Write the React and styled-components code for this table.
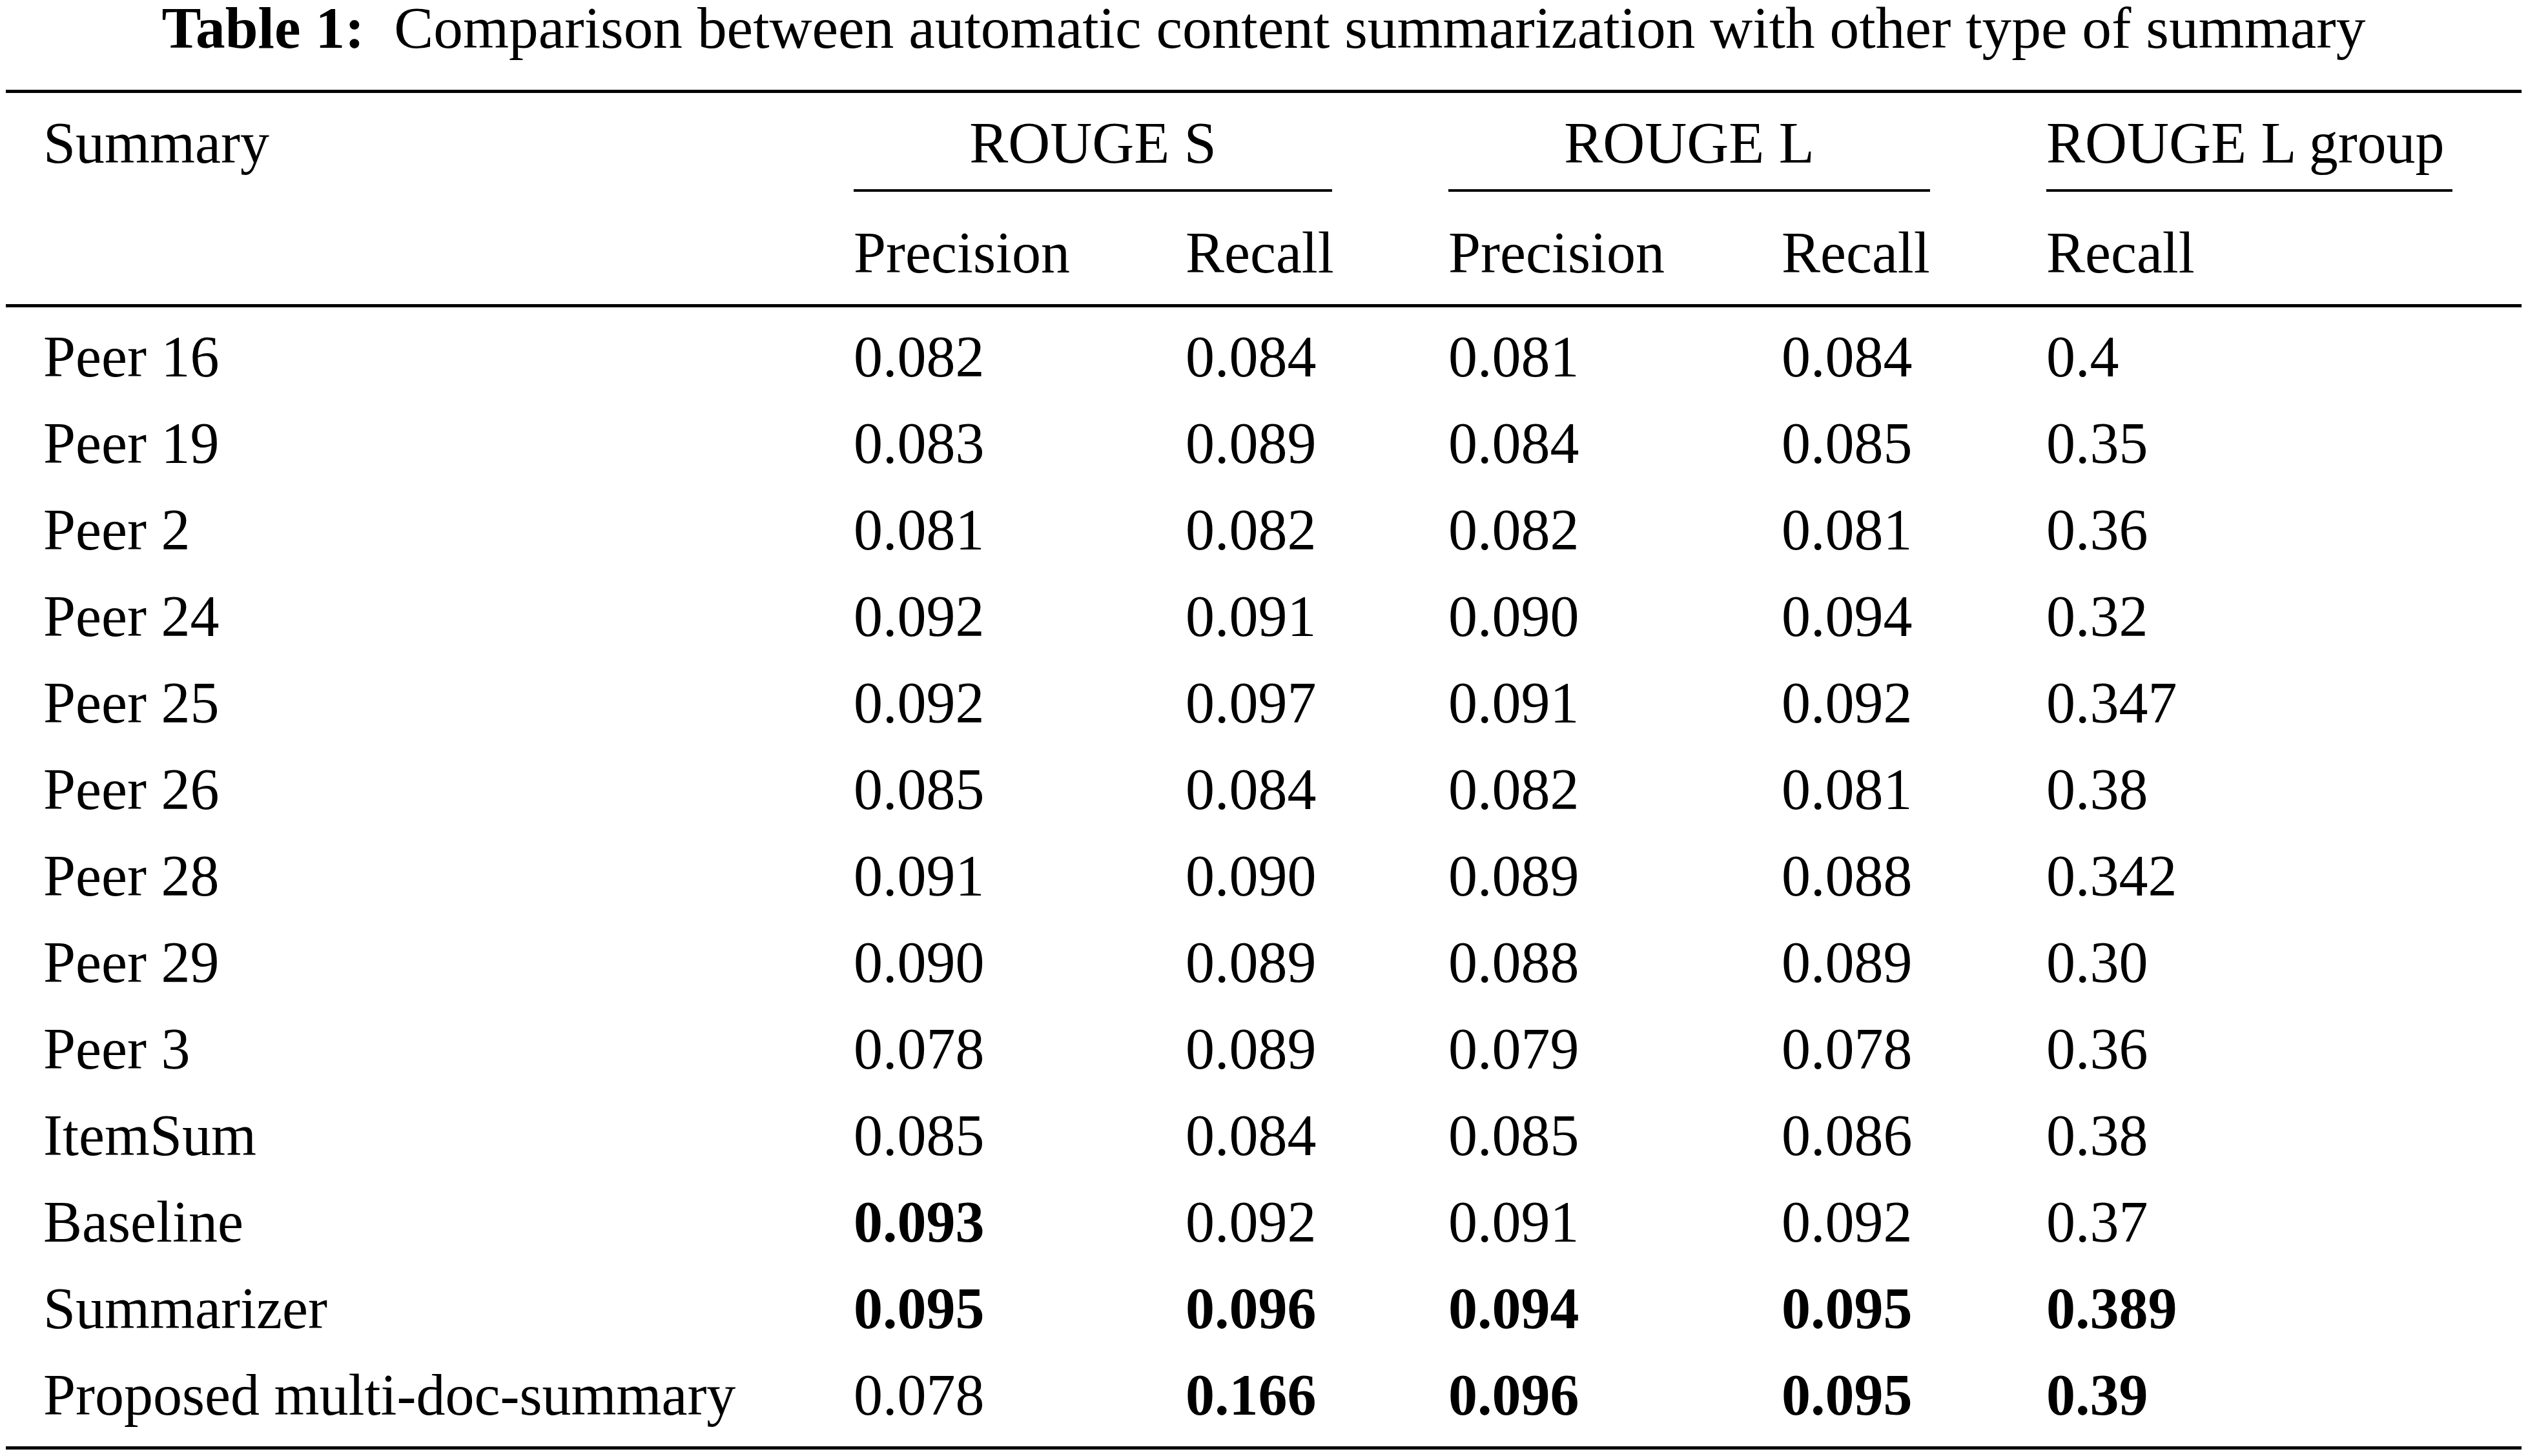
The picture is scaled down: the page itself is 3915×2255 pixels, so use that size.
import React from 'react';
import styled, { createGlobalStyle } from 'styled-components';

const GlobalStyle = createGlobalStyle`
  html, body {
    margin: 0;
    padding: 0;
    background: #ffffff;
  }
  body {
    font-family: "Liberation Serif", "Times New Roman", serif;
    color: #000000;
  }
`;

const COLUMNS = '1075px 334px 227px 336px 230px 629px';

const Page = styled.div`
  width: 3896px;
  padding-left: 9px;
  font-size: 90px;
`;

const Caption = styled.div`
  font-size: 91.4px;
  line-height: 88px;
  height: 88px;
  margin-bottom: 51px;
  text-align: center;
  white-space: pre;

  b {
    font-weight: 700;
  }
`;

const Table = styled.div`
  border-top: 5px solid #000;
  border-bottom: 5px solid #000;
`;

const Head = styled.div`
  display: grid;
  grid-template-columns: ${COLUMNS};
  column-gap: 180px;
  padding-left: 58px;
  border-bottom: 5px solid #000;
`;

const GroupCell = styled.div`
  grid-column: ${p => p.$col};
  grid-row: 1;
  padding-top: 11px;
  padding-bottom: 4px;
  line-height: 134px;
  text-align: ${p => (p.$align ? p.$align : 'center')};
  white-space: nowrap;
  border-bottom: ${p => (p.$rule ? '4px solid #000' : '4px solid transparent')};
`;

const SubCell = styled.div`
  grid-column: ${p => p.$col};
  grid-row: 2;
  padding-top: 28px;
  padding-bottom: 12px;
  line-height: 134px;
  white-space: nowrap;
`;

const Body = styled.div`
  display: grid;
  grid-template-columns: ${COLUMNS};
  column-gap: 180px;
  padding: 10px 0 12px 58px;
`;

const Cell = styled.div`
  line-height: 134px;
  white-space: nowrap;
  font-weight: ${p => (p.$bold ? 700 : 400)};
`;

const rows = [
  { name: 'Peer 16', vals: ['0.082', '0.084', '0.081', '0.084', '0.4'], bold: [] },
  { name: 'Peer 19', vals: ['0.083', '0.089', '0.084', '0.085', '0.35'], bold: [] },
  { name: 'Peer 2', vals: ['0.081', '0.082', '0.082', '0.081', '0.36'], bold: [] },
  { name: 'Peer 24', vals: ['0.092', '0.091', '0.090', '0.094', '0.32'], bold: [] },
  { name: 'Peer 25', vals: ['0.092', '0.097', '0.091', '0.092', '0.347'], bold: [] },
  { name: 'Peer 26', vals: ['0.085', '0.084', '0.082', '0.081', '0.38'], bold: [] },
  { name: 'Peer 28', vals: ['0.091', '0.090', '0.089', '0.088', '0.342'], bold: [] },
  { name: 'Peer 29', vals: ['0.090', '0.089', '0.088', '0.089', '0.30'], bold: [] },
  { name: 'Peer 3', vals: ['0.078', '0.089', '0.079', '0.078', '0.36'], bold: [] },
  { name: 'ItemSum', vals: ['0.085', '0.084', '0.085', '0.086', '0.38'], bold: [] },
  { name: 'Baseline', vals: ['0.093', '0.092', '0.091', '0.092', '0.37'], bold: [0] },
  { name: 'Summarizer', vals: ['0.095', '0.096', '0.094', '0.095', '0.389'], bold: [0, 1, 2, 3, 4] },
  { name: 'Proposed multi-doc-summary', vals: ['0.078', '0.166', '0.096', '0.095', '0.39'], bold: [1, 2, 3, 4] },
];

const subHeads = ['Precision', 'Recall', 'Precision', 'Recall', 'Recall'];

export default function App() {
  return (
    <>
      <GlobalStyle />
      <Page>
        <Caption>
          <b>Table 1:</b>{'  '}Comparison between automatic content summarization with other type of summary
        </Caption>
        <Table>
          <Head>
            <GroupCell $col="1" $align="left">Summary</GroupCell>
            <GroupCell $col="2 / span 2" $rule>ROUGE S</GroupCell>
            <GroupCell $col="4 / span 2" $rule>ROUGE L</GroupCell>
            <GroupCell $col="6" $rule $align="left">ROUGE L group</GroupCell>
            {subHeads.map((label, i) => (
              <SubCell key={i} $col={i + 2}>{label}</SubCell>
            ))}
          </Head>
          <Body>
            {rows.map(row => (
              <React.Fragment key={row.name}>
                <Cell>{row.name}</Cell>
                {row.vals.map((v, i) => (
                  <Cell key={i} $bold={row.bold.includes(i)}>{v}</Cell>
                ))}
              </React.Fragment>
            ))}
          </Body>
        </Table>
      </Page>
    </>
  );
}
